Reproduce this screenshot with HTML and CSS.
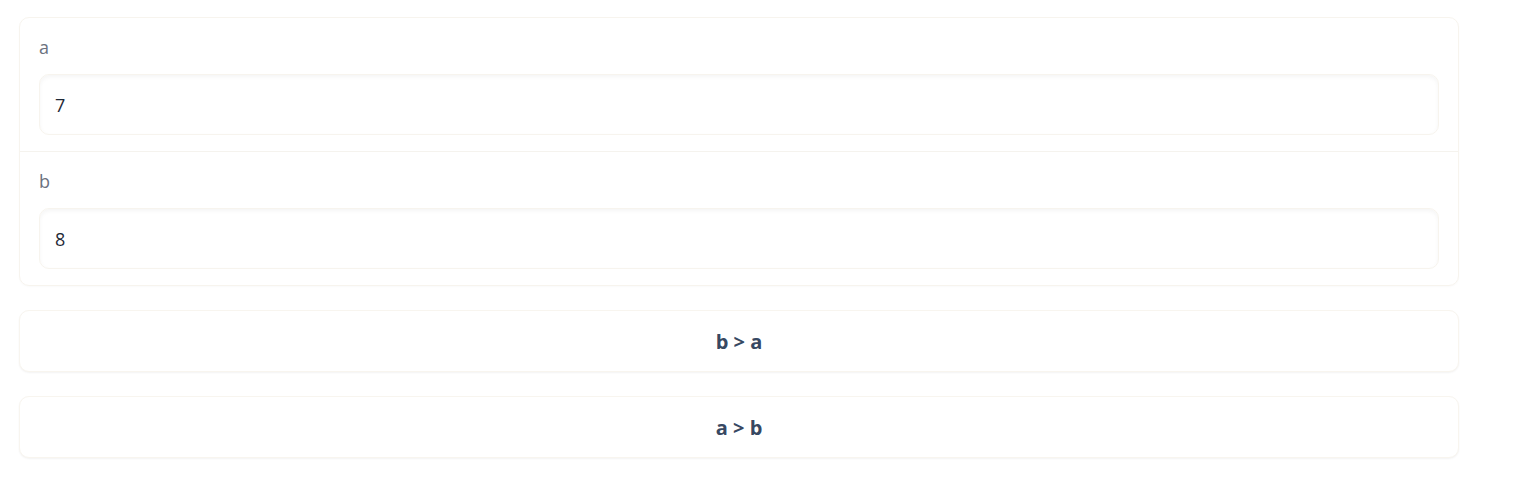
FILE: index.html
```html
<!DOCTYPE html>
<html>
<head>
<meta charset="utf-8">
<link rel="stylesheet" href="styles.css">
</head>
<body>
<div class="app">
  <div class="card">
    <div class="field">
      <label class="label">a</label>
      <div class="input">7</div>
    </div>
    <div class="field divided">
      <label class="label">b</label>
      <div class="input">8</div>
    </div>
  </div>
  <button class="btn">b &gt; a</button>
  <button class="btn">a &gt; b</button>
</div>
</body>
</html>
```
FILE: styles.css
```css
html, body {
  margin: 0;
  padding: 0;
  background: #ffffff;
  font-family: "Open Sans", "Liberation Sans", sans-serif;
}
.app {
  width: 1440px;
  padding: 17px 19px;
  display: flex;
  flex-direction: column;
  gap: 24px;
}
.card {
  border: 1px solid #f7f4ee;
  border-radius: 10px;
  box-shadow: 0 1px 2px rgba(0,0,0,0.025);
  display: flex;
  flex-direction: column;
}
.field {
  padding: 16px 19px 16px 19px;
  display: flex;
  flex-direction: column;
}
.divided {
  border-top: 1px solid #f5f3ee;
}
.label {
  font-size: 18px;
  line-height: 26px;
  color: #6b7280;
  margin-bottom: 14px;
}
.input {
  height: 59px;
  border: 1px solid #f7f4ee;
  border-radius: 10px;
  box-shadow: inset 0 2px 4px rgba(0,0,0,0.045);
  padding: 0 15px;
  display: flex;
  align-items: center;
  font-size: 18px;
  color: #1f2937;
}
.btn {
  height: 62px;
  border: 1px solid #f8f5ef;
  border-radius: 10px;
  background: #ffffff;
  box-shadow: 0 1px 2px rgba(0,0,0,0.05);
  font-family: "Open Sans", "Liberation Sans", sans-serif;
  font-weight: 700;
  font-size: 20px;
  color: #374862;
  padding: 0;
  cursor: pointer;
}
```
